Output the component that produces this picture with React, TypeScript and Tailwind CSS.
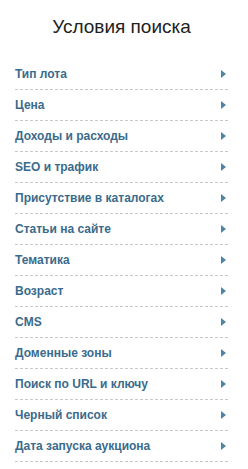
import React from "react";

const items = [
  "Тип лота",
  "Цена",
  "Доходы и расходы",
  "SEO и трафик",
  "Присутствие в каталогах",
  "Статьи на сайте",
  "Тематика",
  "Возраст",
  "CMS",
  "Доменные зоны",
  "Поиск по URL и ключу",
  "Черный список",
  "Дата запуска аукциона",
];

export default function App() {
  return (
    <div className="w-[248px] h-[469px] bg-white pl-[15px] pr-[20px] font-['Liberation_Sans',Arial,sans-serif]">
      <h2 className="pt-[16px] h-[59px] text-center text-[19px] leading-[22px] text-[#222]">
        Условия поиска
      </h2>
      <ul>
        {items.map((t) => (
          <li
            key={t}
            className="flex h-[31px] items-center justify-between border-b border-dashed border-[#c8c8c8] pr-[2px]"
          >
            <span className="text-[12px] font-bold text-[#3a6b8c]">{t}</span>
            <svg width="5" height="8" viewBox="0 0 5 8" className="block">
              <polygon points="0,0 5,4 0,8" fill="#4f84a6" />
            </svg>
          </li>
        ))}
      </ul>
    </div>
  );
}
